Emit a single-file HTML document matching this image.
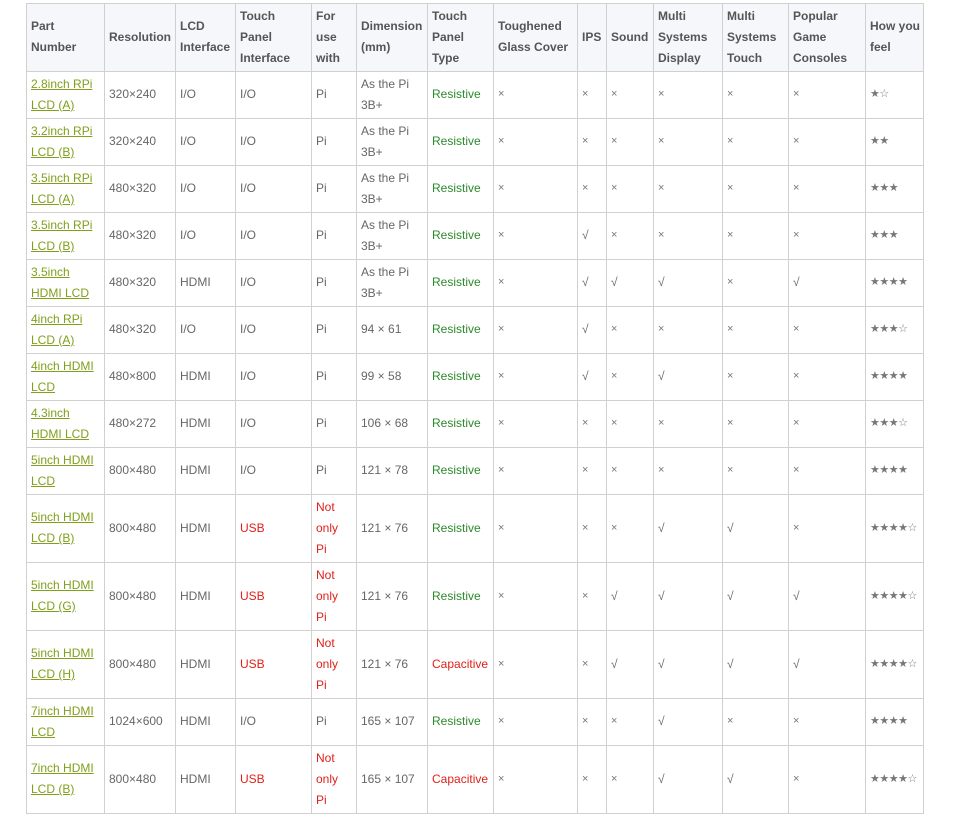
<!DOCTYPE html>
<html><head><meta charset="utf-8"><style>
body{margin:0;background:#fff;width:956px;height:812px;overflow:hidden}
table{position:absolute;left:26px;top:3px;width:898px;border-collapse:collapse;table-layout:fixed;font-family:"Liberation Sans",Arial,sans-serif;font-size:12px;color:#666;line-height:21px}
td,th{border:1px solid #d0d0d0;padding:0 4px;vertical-align:middle;text-align:left;overflow:hidden}
th{background:#f5f7fa;color:#555;font-weight:bold;height:66.5px}
th:last-child,td:last-child{padding-right:0}
tr.r td{height:46px}
tr.t td{height:67px}
a{color:#80a01c;text-decoration:underline}
.g{color:#2b8a2b}.red{color:#e0201a}
.s{font-size:11px;color:#777}
.st{color:#777;font-size:11px;letter-spacing:-0.5px}
</style></head><body>
<table>
<colgroup><col style="width:78px"><col style="width:71px"><col style="width:60px"><col style="width:76px"><col style="width:45px"><col style="width:71px"><col style="width:66px"><col style="width:84px"><col style="width:29px"><col style="width:47px"><col style="width:69px"><col style="width:66px"><col style="width:77px"><col style="width:58px"></colgroup>
<tr><th>Part Number</th><th>Resolution</th><th>LCD Interface</th><th>Touch Panel Interface</th><th>For use with</th><th>Dimension (mm)</th><th>Touch Panel Type</th><th>Toughened Glass Cover</th><th>IPS</th><th>Sound</th><th>Multi Systems Display</th><th>Multi Systems Touch</th><th>Popular Game Consoles</th><th>How you feel</th></tr>
<tr class="r"><td><a>2.8inch RPi LCD (A)</a></td><td>320×240</td><td>I/O</td><td>I/O</td><td>Pi</td><td>As the Pi 3B+</td><td class="g">Resistive</td><td class="s">×</td><td class="s">×</td><td class="s">×</td><td class="s">×</td><td class="s">×</td><td class="s">×</td><td class="st">★☆</td></tr>
<tr class="r"><td><a>3.2inch RPi LCD (B)</a></td><td>320×240</td><td>I/O</td><td>I/O</td><td>Pi</td><td>As the Pi 3B+</td><td class="g">Resistive</td><td class="s">×</td><td class="s">×</td><td class="s">×</td><td class="s">×</td><td class="s">×</td><td class="s">×</td><td class="st">★★</td></tr>
<tr class="r"><td><a>3.5inch RPi LCD (A)</a></td><td>480×320</td><td>I/O</td><td>I/O</td><td>Pi</td><td>As the Pi 3B+</td><td class="g">Resistive</td><td class="s">×</td><td class="s">×</td><td class="s">×</td><td class="s">×</td><td class="s">×</td><td class="s">×</td><td class="st">★★★</td></tr>
<tr class="r"><td><a>3.5inch RPi LCD (B)</a></td><td>480×320</td><td>I/O</td><td>I/O</td><td>Pi</td><td>As the Pi 3B+</td><td class="g">Resistive</td><td class="s">×</td><td>√</td><td class="s">×</td><td class="s">×</td><td class="s">×</td><td class="s">×</td><td class="st">★★★</td></tr>
<tr class="r"><td><a>3.5inch HDMI LCD</a></td><td>480×320</td><td>HDMI</td><td>I/O</td><td>Pi</td><td>As the Pi 3B+</td><td class="g">Resistive</td><td class="s">×</td><td>√</td><td>√</td><td>√</td><td class="s">×</td><td>√</td><td class="st">★★★★</td></tr>
<tr class="r"><td><a>4inch RPi LCD (A)</a></td><td>480×320</td><td>I/O</td><td>I/O</td><td>Pi</td><td>94 × 61</td><td class="g">Resistive</td><td class="s">×</td><td>√</td><td class="s">×</td><td class="s">×</td><td class="s">×</td><td class="s">×</td><td class="st">★★★☆</td></tr>
<tr class="r"><td><a>4inch HDMI LCD</a></td><td>480×800</td><td>HDMI</td><td>I/O</td><td>Pi</td><td>99 × 58</td><td class="g">Resistive</td><td class="s">×</td><td>√</td><td class="s">×</td><td>√</td><td class="s">×</td><td class="s">×</td><td class="st">★★★★</td></tr>
<tr class="r"><td><a>4.3inch HDMI LCD</a></td><td>480×272</td><td>HDMI</td><td>I/O</td><td>Pi</td><td>106 × 68</td><td class="g">Resistive</td><td class="s">×</td><td class="s">×</td><td class="s">×</td><td class="s">×</td><td class="s">×</td><td class="s">×</td><td class="st">★★★☆</td></tr>
<tr class="r"><td><a>5inch HDMI LCD</a></td><td>800×480</td><td>HDMI</td><td>I/O</td><td>Pi</td><td>121 × 78</td><td class="g">Resistive</td><td class="s">×</td><td class="s">×</td><td class="s">×</td><td class="s">×</td><td class="s">×</td><td class="s">×</td><td class="st">★★★★</td></tr>
<tr class="t"><td><a>5inch HDMI LCD (B)</a></td><td>800×480</td><td>HDMI</td><td class="red">USB</td><td class="red">Not only Pi</td><td>121 × 76</td><td class="g">Resistive</td><td class="s">×</td><td class="s">×</td><td class="s">×</td><td>√</td><td>√</td><td class="s">×</td><td class="st">★★★★☆</td></tr>
<tr class="t"><td><a>5inch HDMI LCD (G)</a></td><td>800×480</td><td>HDMI</td><td class="red">USB</td><td class="red">Not only Pi</td><td>121 × 76</td><td class="g">Resistive</td><td class="s">×</td><td class="s">×</td><td>√</td><td>√</td><td>√</td><td>√</td><td class="st">★★★★☆</td></tr>
<tr class="t"><td><a>5inch HDMI LCD (H)</a></td><td>800×480</td><td>HDMI</td><td class="red">USB</td><td class="red">Not only Pi</td><td>121 × 76</td><td class="red">Capacitive</td><td class="s">×</td><td class="s">×</td><td>√</td><td>√</td><td>√</td><td>√</td><td class="st">★★★★☆</td></tr>
<tr class="r"><td><a>7inch HDMI LCD</a></td><td>1024×600</td><td>HDMI</td><td>I/O</td><td>Pi</td><td>165 × 107</td><td class="g">Resistive</td><td class="s">×</td><td class="s">×</td><td class="s">×</td><td>√</td><td class="s">×</td><td class="s">×</td><td class="st">★★★★</td></tr>
<tr class="t"><td><a>7inch HDMI LCD (B)</a></td><td>800×480</td><td>HDMI</td><td class="red">USB</td><td class="red">Not only Pi</td><td>165 × 107</td><td class="red">Capacitive</td><td class="s">×</td><td class="s">×</td><td class="s">×</td><td>√</td><td>√</td><td class="s">×</td><td class="st">★★★★☆</td></tr>
</table>
</body></html>
